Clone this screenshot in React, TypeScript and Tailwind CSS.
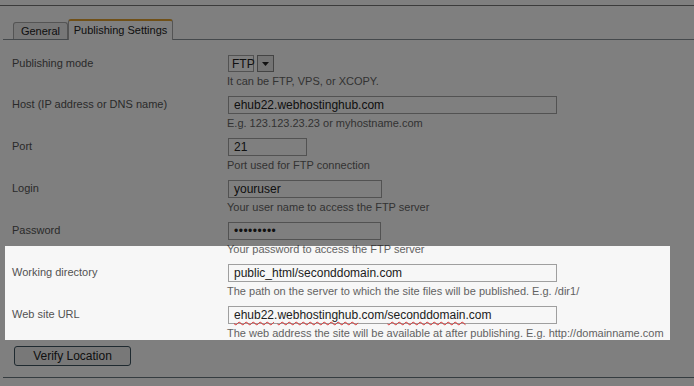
export default function App() {
  const rows = [
    { label: "Host (IP address or DNS name)", value: "ehub22.webhostinghub.com", w: "w-[329px]", help: "E.g. 123.123.23.23 or myhostname.com" },
    { label: "Port", value: "21", w: "w-[79px]", help: "Port used for FTP connection" },
    { label: "Login", value: "youruser", w: "w-[154px]", help: "Your user name to access the FTP server" },
    { label: "Password", value: "•••••••••", w: "w-[153px]", help: "Your password to access the FTP server", pwd: true },
    { label: "Working directory", value: "public_html/seconddomain.com", w: "w-[329px]", help: "The path on the server to which the site files will be published. E.g. /dir1/" },
  ];

  return (
    <div className="relative w-[694px] h-[386px] overflow-hidden bg-white text-[#555] font-['Liberation_Sans',Arial,sans-serif]">
      {/* top rule */}
      <div className="pt-[5px]">
        <div className="border-t border-[#777]" />
      </div>

      {/* tabs */}
      <div className="ml-[3px] mt-[13px] flex items-end pl-[10px] h-[21px] border-b border-[#8a9299]">
        <div className="w-[55px] h-[17px] flex items-center justify-center border border-b-0 border-[#a8a8a8] rounded-t-[3px] bg-[#eeeeee] text-[11px] text-[#222]">
          General
        </div>
        <div className="w-[105px] h-[21px] -mb-px flex items-center justify-center border-x border-[#a8a8a8] border-t-2 border-t-[#e0a030] rounded-t-[3px] bg-white text-[11px] text-[#222]">
          Publishing Settings
        </div>
      </div>

      {/* form */}
      <div className="pt-[15px] pl-[12px] text-[11px]">
        <div className="flex mb-[9px]">
          <div className="w-[215px] leading-[16px]">Publishing mode</div>
          <div>
            <div className="flex items-center gap-[3px] ml-px">
              <div className="h-[17px] w-[26px] border border-[#a5a5a5] flex items-center pl-[3px] text-[12px] text-[#222]">FTP</div>
              <div className="h-[17px] w-[17px] border border-[#888] bg-[#e8e8e8] flex items-center justify-center">
                <svg width="7" height="4" viewBox="0 0 7 4"><path d="M0 0h7L3.5 4z" fill="#222" /></svg>
              </div>
            </div>
            <div className="mt-[3px] leading-[12px] text-[#666]">It can be FTP, VPS, or XCOPY.</div>
          </div>
        </div>

        {rows.map((r, i) => (
          <div key={i} className="flex mb-[9px]">
            <div className="w-[215px] leading-[16px]">{r.label}</div>
            <div>
              <div className={`${r.w} ml-px h-[18px] border border-[#a5a5a5] bg-white flex items-center pl-[5px] text-[#222] ${r.pwd ? "text-[12px] tracking-[0.5px]" : "text-[12px]"}`}>
                {r.value}
              </div>
              <div className="mt-[3px] leading-[12px] text-[#666] whitespace-nowrap">{r.help}</div>
            </div>
          </div>
        ))}

        <div className="flex">
          <div className="w-[215px] leading-[16px]">Web site URL</div>
          <div>
            <div className="w-[329px] ml-px h-[18px] border border-[#a5a5a5] bg-white flex items-center pl-[5px] text-[12px] text-[#222]">
              <span className="underline decoration-wavy decoration-[#e03030] decoration-1 underline-offset-2">ehub22</span>.
              <span className="underline decoration-wavy decoration-[#e03030] decoration-1 underline-offset-2">webhostinghub</span>.com/
              <span className="underline decoration-wavy decoration-[#e03030] decoration-1 underline-offset-2">seconddomain</span>.com
            </div>
            <div className="mt-[3px] leading-[12px] text-[#666] whitespace-nowrap">
              The web address the site will be available at after publishing. E.g. http://domainname.com
            </div>
          </div>
        </div>
      </div>

      {/* button */}
      <div className="pl-[14px] mt-[4px]">
        <button className="w-[117px] h-[20px] border border-[#3e5460] rounded-[3px] bg-[#f0f0f0] text-[12px] text-[#222]">
          Verify Location
        </button>
      </div>
      <div className="ml-[3px] mt-[10px] border-t border-[#6a7880]" />

      {/* spotlight overlay */}
      <div className="absolute left-[5px] top-[246px] w-[665px] h-[94px] bg-[rgba(0,0,0,0.03)] shadow-[0_0_0_1000px_rgba(0,0,0,0.5)]" />
    </div>
  );
}
